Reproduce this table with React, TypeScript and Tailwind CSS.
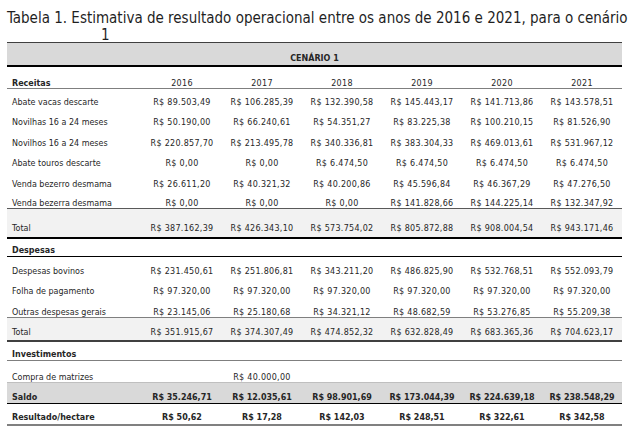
import React from 'react';

type RowProps = {
  label: string;
  values?: string[];
  className: string;
  bold?: boolean;
  plainValues?: boolean;
};

const years = ['2016', '2017', '2018', '2019', '2020', '2021'];

const Row = ({ label, values = [], className, bold, plainValues }: RowProps) => (
  <div className={`grid grid-cols-[135px_repeat(6,80px)] items-end leading-none ${className}`}>
    <div className={`pl-[5px] whitespace-nowrap ${bold ? 'font-bold' : ''}`}>{label}</div>
    {years.map((y, i) => (
      <div
        key={y}
        className={`text-center whitespace-nowrap ${bold && !plainValues ? 'font-bold' : 'tracking-[0.3px]'}`}
      >
        {values[i] ?? ''}
      </div>
    ))}
  </div>
);

const App = () => {
  return (
    <div className="w-[636px] h-[443px] bg-white overflow-hidden text-[#262626]">
      {/* Caption */}
      <div className="h-[42px] pt-[10px] pl-[7px] text-[15px] leading-[17px] text-[#1f1f1f] font-['DejaVu_Sans_Condensed','DejaVu_Sans',sans-serif] whitespace-nowrap">
        <div>Tabela 1. Estimativa de resultado operacional entre os anos de 2016 e 2021, para o cenário</div>
        <div className="pl-[94px]">1</div>
      </div>

      {/* Table */}
      <div className="ml-[7px] w-[615px] border-t border-[#404040] text-[8px] font-['DejaVu_Sans',sans-serif]">
        <div className="h-[24px] bg-[#d9d9d9] border-b-2 border-black flex items-end justify-center pb-[2px] font-bold leading-none">
          CENÁRIO 1
        </div>

        <Row label="Receitas" values={years} bold plainValues className="h-[22px] border-b border-[#7f7f7f]" />
        <Row label="Abate vacas descarte" values={['R$ 89.503,49', 'R$ 106.285,39', 'R$ 132.390,58', 'R$ 145.443,17', 'R$ 141.713,86', 'R$ 143.578,51']} className="h-[18px]" />
        <Row label="Novilhas 16 a 24 meses" values={['R$ 50.190,00', 'R$ 66.240,61', 'R$ 54.351,27', 'R$ 83.225,38', 'R$ 100.210,15', 'R$ 81.526,90']} className="h-[20px]" />
        <Row label="Novilhos 16 a 24 meses" values={['R$ 220.857,70', 'R$ 213.495,78', 'R$ 340.336,81', 'R$ 383.304,33', 'R$ 469.013,61', 'R$ 531.967,12']} className="h-[21px]" />
        <Row label="Abate touros descarte" values={['R$ 0,00', 'R$ 0,00', 'R$ 6.474,50', 'R$ 6.474,50', 'R$ 6.474,50', 'R$ 6.474,50']} className="h-[20px]" />
        <Row label="Venda bezerro desmama" values={['R$ 26.611,20', 'R$ 40.321,32', 'R$ 40.200,86', 'R$ 45.596,84', 'R$ 46.367,29', 'R$ 47.276,50']} className="h-[21px]" />
        <Row label="Venda bezerra desmama" values={['R$ 0,00', 'R$ 0,00', 'R$ 0,00', 'R$ 141.828,66', 'R$ 144.225,14', 'R$ 132.347,92']} className="h-[20px] border-b border-[#595959]" />
        <Row label="Total" values={['R$ 387.162,39', 'R$ 426.343,10', 'R$ 573.754,02', 'R$ 805.872,88', 'R$ 908.004,54', 'R$ 943.171,46']} className="h-[30px] pb-[4px] bg-[#f2f2f2] border-b-2 border-black" />

        <Row label="Despesas" bold className="h-[18px] pb-[1px] border-b border-black" />
        <Row label="Despesas bovinos" values={['R$ 231.450,61', 'R$ 251.806,81', 'R$ 343.211,20', 'R$ 486.825,90', 'R$ 532.768,51', 'R$ 552.093,79']} className="h-[19px]" />
        <Row label="Folha de pagamento" values={['R$ 97.320,00', 'R$ 97.320,00', 'R$ 97.320,00', 'R$ 97.320,00', 'R$ 97.320,00', 'R$ 97.320,00']} className="h-[20px]" />
        <Row label="Outras despesas gerais" values={['R$ 23.145,06', 'R$ 25.180,68', 'R$ 34.321,12', 'R$ 48.682,59', 'R$ 53.276,85', 'R$ 55.209,38']} className="h-[22px] border-b border-[#7f7f7f]" />
        <Row label="Total" values={['R$ 351.915,67', 'R$ 374.307,49', 'R$ 474.852,32', 'R$ 632.828,49', 'R$ 683.365,36', 'R$ 704.623,17']} className="h-[24px] pb-[3px] bg-[#f2f2f2] border-b-2 border-[#404040]" />

        <Row label="Investimentos" bold className="h-[19px] pb-[1px] border-b border-[#7f7f7f]" />
        <Row label="Compra de matrizes" values={['', 'R$ 40.000,00']} className="h-[21px]" />
        <Row label="Saldo" bold values={['R$ 35.246,71', 'R$ 12.035,61', 'R$ 98.901,69', 'R$ 173.044,39', 'R$ 224.639,18', 'R$ 238.548,29']} className="h-[22px] pb-[1px] bg-[#d9d9d9] border-t border-[#bfbfbf] border-b border-b-black" />
        <Row label="Resultado/hectare" bold values={['R$ 50,62', 'R$ 17,28', 'R$ 142,03', 'R$ 248,51', 'R$ 322,61', 'R$ 342,58']} className="h-[22px] pb-[2px] border-b-2 border-[#808080]" />
      </div>
    </div>
  );
};

export default App;
